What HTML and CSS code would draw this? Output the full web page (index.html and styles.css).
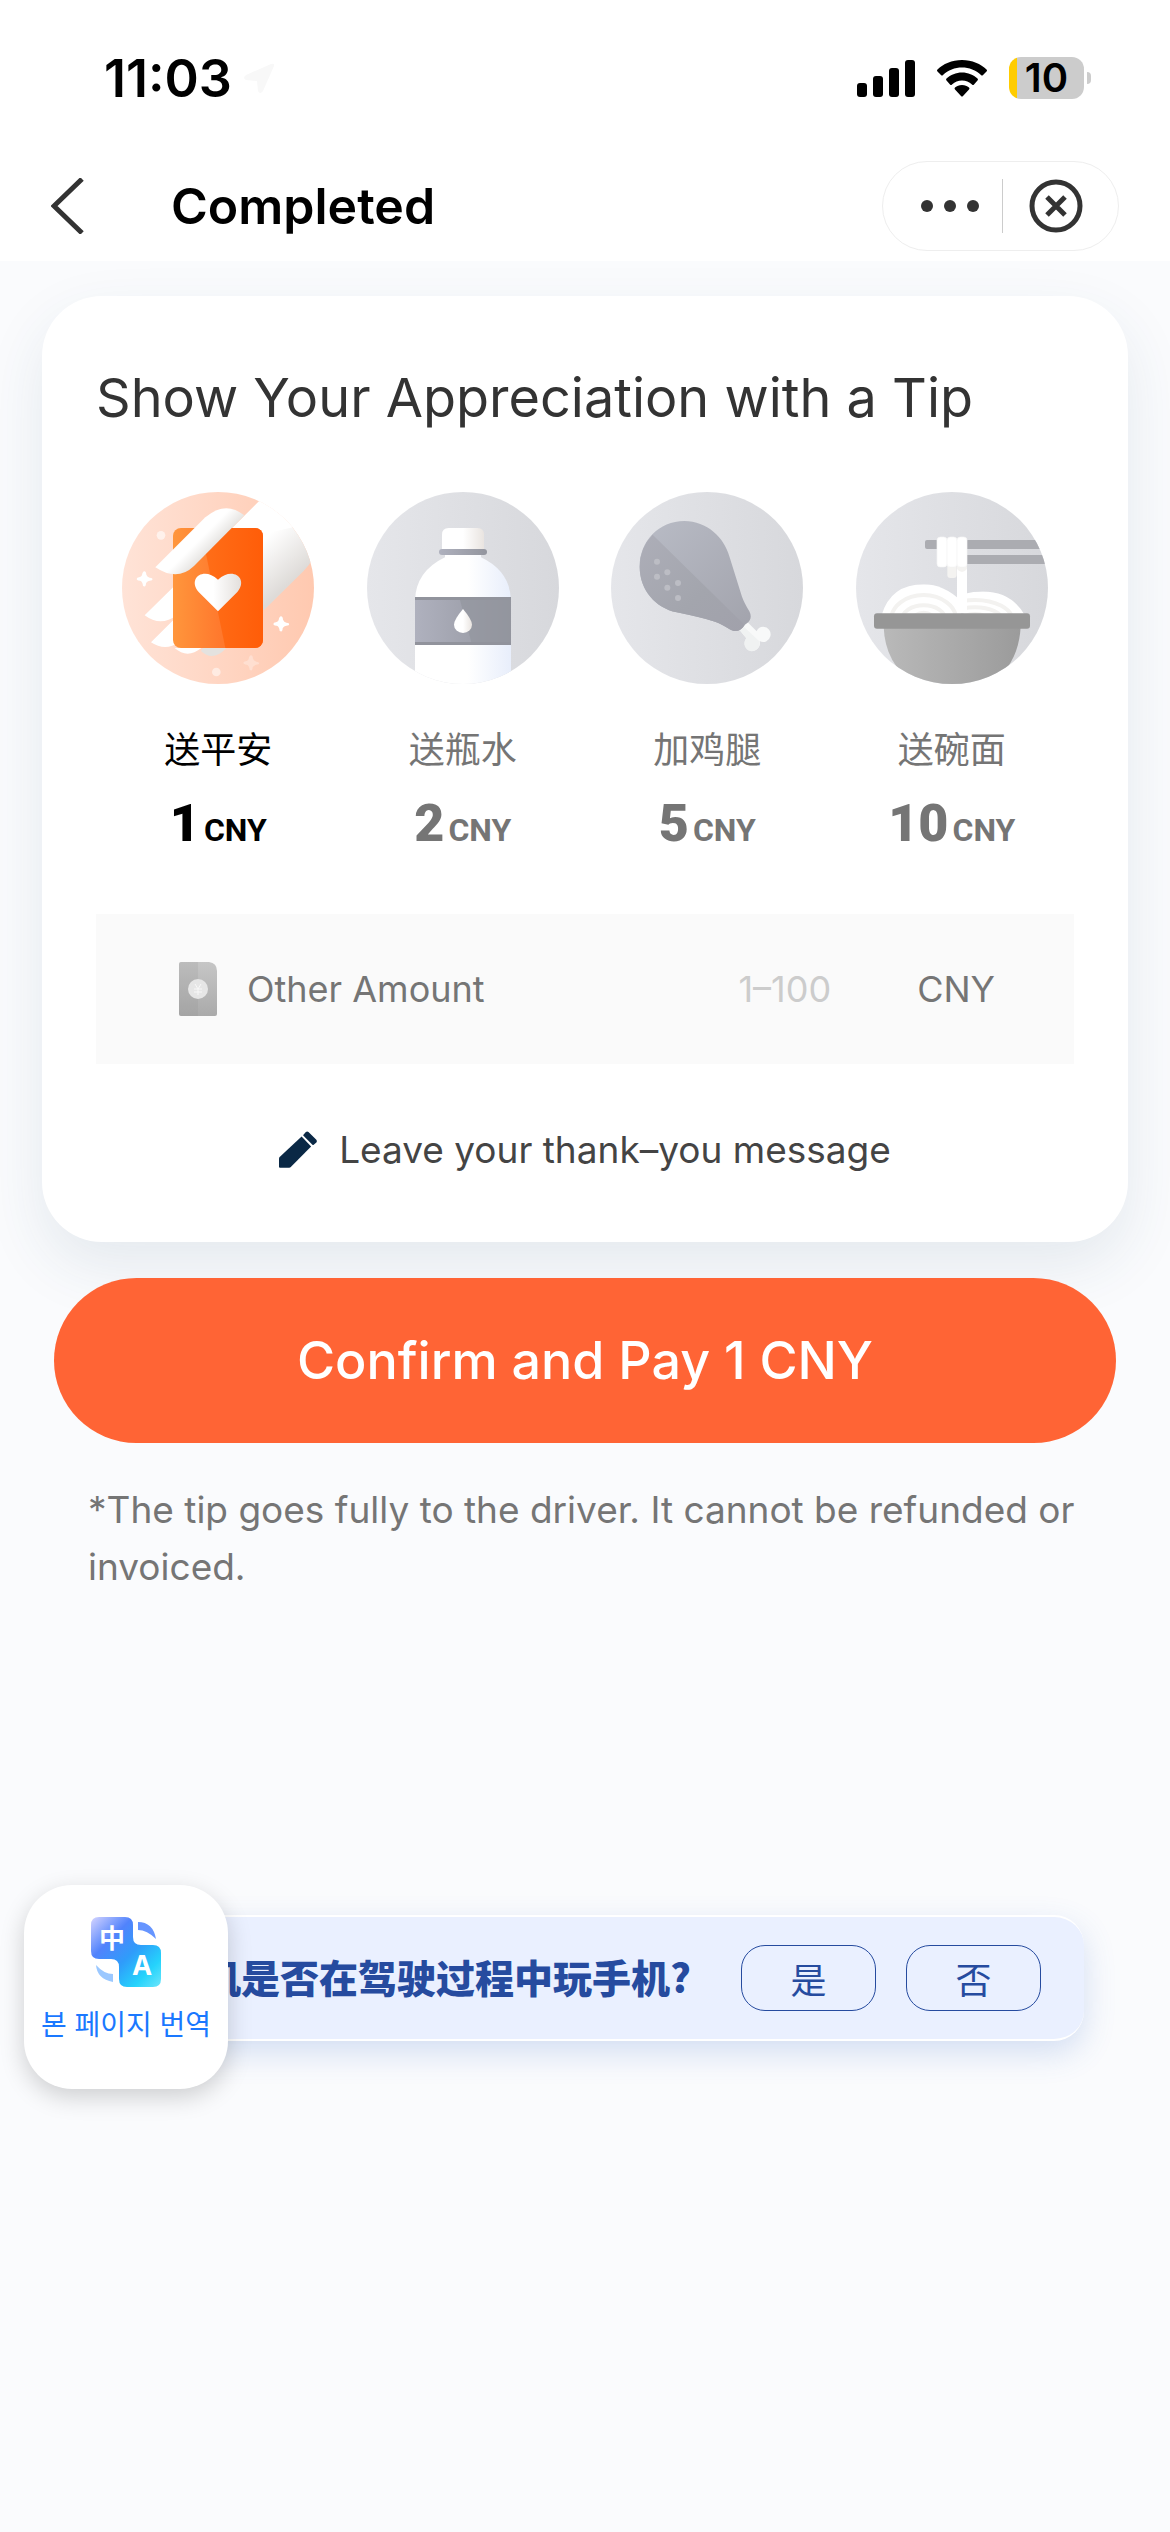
FILE: index.html
```html
<!DOCTYPE html>
<html lang="en">
<head>
  <meta charset="UTF-8">
  <meta name="viewport" content="width=device-width, initial-scale=1.0">
  <title>Completed</title>
  <link rel="stylesheet" href="styles.css">
</head>
<body>
  <header class="header">
    <div class="status-bar">
      <span class="time">11:03</span>
      <svg class="location" viewBox="0 0 30 30" fill="#f8f8f8"><path d="M27 1L2 12q-4 3 0 5l11 1 1 10q2 4 5 0L30 3q1-3-3-2z"/></svg>
      <div class="status-icons">
        <svg class="signal" viewBox="0 0 58 37">
          <rect x="0" y="23" width="10" height="14" rx="3"/>
          <rect x="16" y="16" width="10" height="21" rx="3"/>
          <rect x="32" y="8" width="10" height="29" rx="3"/>
          <rect x="48" y="0" width="10" height="37" rx="3"/>
        </svg>
        <svg class="wifi" viewBox="0 0 50 37">
          <path d="M25 0C15 0 6 4 .5 9.500q-1 1 0 2l3.500 3.500q1 1 2 0C11 10 18 7.500 25 7.500S39 10 44 15q1 1 2 0l3.500-3.500q1-1 0-2C44 4 35 0 25 0z"/>
          <path d="M25 12.500c-6 0-11.500 2.500-15.500 6q-1 1 0 2l3.500 4q1 1 2 0c3-2.500 6-4 10-4s7 1.500 10 4q1 1 2 0l3.500-4q1-1 0-2c-4-3.500-9.500-6-15.500-6z"/>
          <path d="M25 25c-3 0-5 1-7 2.500q-1 1 0 2l6 6.500q1 1 2 0l6-6.500q1-1 0-2C30 26 28 25 25 25z"/>
        </svg>
        <div class="battery"><span class="battery-level">10</span></div>
      </div>
    </div>
    <nav class="nav">
      <button class="back" aria-label="Back">
        <svg viewBox="0 0 34 56" fill="none" stroke="#333" stroke-width="5"><path d="M31 1L3 28l28 27"/></svg>
      </button>
      <h1 class="page-title">Completed</h1>
      <div class="capsule">
        <button class="capsule-button" aria-label="More">
          <svg class="dots" viewBox="0 0 58 12" fill="#333"><circle cx="6" cy="6" r="6"/><circle cx="29" cy="6" r="6"/><circle cx="52" cy="6" r="6"/></svg>
        </button>
        <span class="divider"></span>
        <button class="capsule-button" aria-label="Close">
          <svg class="close" viewBox="0 0 54 54" fill="none" stroke="#333" stroke-width="5"><circle cx="27" cy="27" r="24"/><path d="M18 18l18 18M36 18L18 36"/></svg>
        </button>
      </div>
    </nav>
  </header>

  <main class="main">
    <form class="card">
      <h2 class="card-title">Show Your Appreciation with a Tip</h2>
      <div class="tips" role="radiogroup" aria-label="Tip">
        <label class="tip">
          <input type="radio" name="tip" value="1" checked>
          <svg class="tip-icon" viewBox="66 66 576 576">
            <defs>
              <linearGradient id="peach"><stop offset="0" stop-color="#ffe3d7"/><stop offset="1" stop-color="#ffc9b0"/></linearGradient>
              <linearGradient id="orange"><stop offset="0" stop-color="#ff963c"/><stop offset=".5" stop-color="#ff7a2e"/><stop offset="1" stop-color="#ff6c1c"/></linearGradient>
              <linearGradient id="orangeDark"><stop offset="0" stop-color="#ff6f19"/><stop offset="1" stop-color="#ff5c08"/></linearGradient>
              <linearGradient id="heart"><stop offset=".4" stop-color="#fff"/><stop offset="1" stop-color="#e3dfdc"/></linearGradient>
              <linearGradient id="thumb" gradientUnits="userSpaceOnUse" x1="270" y1="180" x2="340" y2="250"><stop offset=".4" stop-color="#fff"/><stop offset="1" stop-color="#dfddda"/></linearGradient>
              <linearGradient id="palm" gradientUnits="userSpaceOnUse" x1="490" y1="210" x2="590" y2="320"><stop offset="0" stop-color="#fff"/><stop offset="1" stop-color="#dedbd8"/></linearGradient>
              <clipPath id="round"><circle cx="354" cy="354" r="288"/></clipPath>
              <clipPath id="packet"><rect x="219" y="174" width="270" height="360" rx="24"/></clipPath>
            </defs>
            <g clip-path="url(#round)">
              <rect x="66" y="66" width="576" height="576" fill="url(#peach)"/>
              <path d="M478 93L330 240v180h162L610 304q24-24 40-60V60H500z" fill="url(#palm)"/>
              <path d="M478 93L400 172h89v20l90-20 10-90z" fill="#fff"/>
              <path d="M230 341L134 436q48 36 96 0zM230 440L153 517q42 28 85 0zM224 534q38 34 80 0z" fill="#fff"/>
              <path d="M303 543q36 34 76-9h-70z" fill="#e4e2df"/>
            </g>
            <g clip-path="url(#packet)">
              <rect x="219" y="174" width="270" height="360" fill="url(#orange)"/>
              <path d="M302 174l74 360h120V170z" fill="url(#orangeDark)"/>
            </g>
            <path d="M166 292L316 142q60-52 117-6L282 288q-50 48-116 4z" fill="url(#thumb)"/>
            <path d="M354 424l-58-58c-35-42 16-78 58-37 42-41 93-5 58 37z" fill="url(#heart)"/>
            <path id="star" d="M133 304q5 0 6 10 3 7 10 9 12 1 7 8-15 2-18 9 0 13-9 8-1-14-9-16-14-1-8-9 12-2 14-8 2-11 7-11z" fill="#fff"/>
            <use href="#star" x="410" y="135"/>
            <use href="#star" x="320" y="252" opacity=".3"/>
            <circle cx="183" cy="196" r="13" fill="#fff" opacity=".6"/>
            <circle cx="349" cy="606" r="13" fill="#fff" opacity=".5"/>
          </svg>
          <span class="tip-name" lang="zh">送平安</span>
          <span class="tip-price"><b>1</b> CNY</span>
        </label>

        <label class="tip">
          <input type="radio" name="tip" value="2">
          <svg class="tip-icon" viewBox="66 66 576 576">
            <defs>
              <linearGradient id="grey"><stop offset="0" stop-color="#e5e6ea"/><stop offset="1" stop-color="#d7d8dc"/></linearGradient>
              <linearGradient id="bottle"><stop offset=".55" stop-color="#fff"/><stop offset="1" stop-color="#e8eefb"/></linearGradient>
              <linearGradient id="cap"><stop offset=".5" stop-color="#fff"/><stop offset="1" stop-color="#e9e4e0"/></linearGradient>
              <linearGradient id="band"><stop offset="0" stop-color="#afb1be"/><stop offset="1" stop-color="#93959e"/></linearGradient>
            </defs>
            <g clip-path="url(#round)">
              <rect x="66" y="66" width="576" height="576" fill="url(#grey)"/>
              <path d="M300 250h108v12q88 42 90 130v250H210V392q2-88 90-130z" fill="url(#bottle)"/>
              <path d="M291 240v-46q0-20 20-20h86q20 0 20 20v46z" fill="url(#cap)"/>
              <rect x="282" y="237" width="144" height="18" rx="9" fill="url(#band)"/>
              <rect x="210" y="381" width="288" height="144" fill="url(#band)"/>
              <path d="M345 390l34 126h119V390z" fill="#93959e" opacity=".7"/>
              <path d="M210 381h288v9H210zM210 516h288v9H210z" fill="#91939c"/>
              <path d="M354 417q27 32 27 47a27 25 0 0 1-54 0q0-15 27-47z" fill="url(#cap)"/>
            </g>
          </svg>
          <span class="tip-name" lang="zh">送瓶水</span>
          <span class="tip-price"><b>2</b> CNY</span>
        </label>

        <label class="tip">
          <input type="radio" name="tip" value="5">
          <svg class="tip-icon" viewBox="63 66 576 576">
            <defs>
              <linearGradient id="meatLight" x1="0" y1="0" x2="1" y2="1"><stop offset="0" stop-color="#b9bcc6"/><stop offset="1" stop-color="#a2a3ac"/></linearGradient>
              <linearGradient id="meatDark" x1="0" y1="0" x2="1" y2="1"><stop offset="0" stop-color="#adaeb8"/><stop offset=".6" stop-color="#a3a5ad"/><stop offset="1" stop-color="#a1a1ab"/></linearGradient>
            </defs>
            <circle cx="351" cy="354" r="288" fill="url(#grey)"/>
            <path d="M447 478l25-22 28 28q4-14 20-14a22 23 0 1 1-11 43 23 23 0 1 1-40-8z" fill="#f8f9f9"/>
            <path d="M447 478l12-10 49 46a23 23 0 1 1-39-9z" fill="#f0f2f2"/>
            <path d="M283 153c68 0 120 50 135 106l38 121q6 17 22 44c12 24-4 35-14 41-10 17-28 24-45 13q-25-17-44-23-38-12-115-28C198 414 149 361 149 290c0-77 58-137 134-137z" fill="url(#meatLight)"/>
            <path d="M188 194l276 271c-10 17-28 24-45 13q-25-17-44-23-38-12-115-28C198 414 149 361 149 290q0-56 39-96z" fill="url(#meatDark)"/>
            <g fill="#bcbdc4"><circle cx="201" cy="275" r="9"/><circle cx="232" cy="307" r="9"/><circle cx="201" cy="320" r="9"/><circle cx="264" cy="339" r="9"/><circle cx="232" cy="353" r="9"/><circle cx="264" cy="384" r="9"/></g>
          </svg>
          <span class="tip-name" lang="zh">加鸡腿</span>
          <span class="tip-price"><b>5</b> CNY</span>
        </label>

        <label class="tip">
          <input type="radio" name="tip" value="10">
          <svg class="tip-icon" viewBox="63 66 576 576">
            <defs>
              <linearGradient id="bowl"><stop offset="0" stop-color="#b9b9b9"/><stop offset="1" stop-color="#9b9b9b"/></linearGradient>
              <clipPath id="roundBowl"><circle cx="351" cy="354" r="288"/></clipPath>
              <clipPath id="noodleLeft"><path d="M140 435q28-92 126-92 60 0 112 50v42z"/></clipPath>
              <clipPath id="noodleRight"><path d="M385 372q130-30 184 63H385z"/></clipPath>
            </defs>
            <g clip-path="url(#roundBowl)">
              <rect x="63" y="66" width="576" height="576" fill="url(#grey)"/>
              <rect x="270" y="210" width="370" height="27" rx="6" fill="#abacb1"/>
              <rect x="380" y="255" width="260" height="27" fill="#abacb1"/>
              <rect x="337" y="270" width="28" height="54" rx="9" fill="#f4f3f1"/>
              <g clip-path="url(#noodleLeft)">
                <path d="M130 330h260v110H130z" fill="#fff"/>
                <g fill="none" stroke="#f3f2f0" stroke-width="12"><ellipse cx="266" cy="450" rx="98" ry="75"/><ellipse cx="266" cy="450" rx="66" ry="44"/><ellipse cx="266" cy="450" rx="32" ry="22"/></g>
              </g>
              <g clip-path="url(#noodleRight)">
                <path d="M380 350h200v90H380z" fill="#fff"/>
                <g fill="none" stroke="#f3f2f0" stroke-width="12"><ellipse cx="420" cy="450" rx="112" ry="60"/><ellipse cx="420" cy="450" rx="82" ry="38"/><ellipse cx="420" cy="450" rx="40" ry="18"/></g>
              </g>
              <path d="M366 280h30v150h-30z" fill="#fff"/>
              <path d="M366 285h30v12q-7 9-15 9t-15-9z" fill="#f4f3f1"/>
              <g fill="#fff" stroke="#f4f4f4" stroke-width="2"><rect x="306" y="201" width="30" height="90" rx="10"/><rect x="336" y="201" width="30" height="90" rx="10"/><rect x="366" y="201" width="30" height="90" rx="10"/></g>
              <path d="M146 470h411q-6 112-90 172H240q-90-60-94-172z" fill="url(#bowl)"/>
              <rect x="117" y="430" width="468" height="46" rx="9" fill="#969696"/>
            </g>
          </svg>
          <span class="tip-name" lang="zh">送碗面</span>
          <span class="tip-price"><b>10</b> CNY</span>
        </label>
      </div>

      <div class="amount">
        <svg class="amount-icon" viewBox="0 0 38 54">
          <defs><linearGradient id="note" x1="0" y1="0" x2="0" y2="1"><stop offset="0" stop-color="#c6c6c6"/><stop offset="1" stop-color="#aaa"/></linearGradient></defs>
          <path d="M2 0h28q8 1 8 9v43q0 2-2 2H2q-2 0-2-2V2q0-2 2-2z" fill="url(#note)"/>
          <path d="M19 0v54H2q-2 0-2-2V2q0-2 2-2z" fill="#888" opacity=".16"/>
          <circle cx="19" cy="27" r="10" fill="#e6e6e6"/>
          <path d="M16 22l3 5 3-5M19 27v6M15 27h8M15 30h8" fill="none" stroke="#f8f8f8"/>
        </svg>
        <label for="amount">Other Amount</label>
        <input type="text" id="amount" placeholder="1–100">
        <span>CNY</span>
      </div>

      <button type="button" class="message">
        <svg class="pencil" viewBox="364 567 116 114" fill="#0a2845">
          <path d="M433 584l29 30-62 63q-2 2-5 2h-28q-3 0-3-3v-25q0-3 2-5z"/>
          <path d="M438 579l8-9q4-3 8 0l24 24q3 4 0 8l-8 7q-2 2-4 0l-28-28z"/>
        </svg>
        Leave your thank–you message
      </button>
    </form>

    <button class="pay">Confirm and Pay 1 CNY</button>
    <p class="note">*The tip goes fully to the driver. It cannot be refunded or invoiced.</p>

    <section class="survey" lang="zh">
      <span class="survey-text">司机是否在驾驶过程中玩手机?</span>
      <button class="answer">是</button>
      <button class="answer">否</button>

      <button class="translate" lang="ko">
        <svg class="translate-icon" viewBox="0 0 70 70">
          <defs><linearGradient id="blue" x1="0" y1="0" x2="1" y2="1"><stop offset="0" stop-color="#d5d4ff"/><stop offset=".3" stop-color="#5183fc"/><stop offset=".55" stop-color="#2f9cfa"/><stop offset=".8" stop-color="#25d3fc"/><stop offset="1" stop-color="#6ce6fb"/></linearGradient></defs>
          <path d="M8 0h26q8 0 8 8v12q0 8 8 8h12q8 0 8 8v26q0 8-8 8H36q-8 0-8-8V50q0-8-8-8H8q-8 0-8-8V8q0-8 8-8z" fill="url(#blue)"/>
          <path d="M47 5q15 0 18 17-9-9-18-9z" fill="#6695ff"/>
          <path d="M5 48q8 9 17 9v8Q6 62 5 48z" fill="#9bc8ff"/>
          <text class="translate-zh" x="21" y="31">中</text>
          <text class="translate-en" x="51" y="58">A</text>
        </svg>
        본 페이지 번역
      </button>
    </section>
  </main>
</body>
</html>
```
FILE: styles.css
```css
/* Basic styles */
* {
  box-sizing: border-box;
}
body {
  font-family: Inter, "Noto Sans CJK SC", sans-serif;
  font-size: 36px;
  margin: 0;
  min-height: 100vh;
  color: #333;
  background-color: #fafbfd;
}
button {
  font: inherit;
  color: inherit;
  padding: 0;
  border: none;
  background: none;
  cursor: pointer;
}
svg {
  display: block;
  flex: none;
}

/* Header */
.header {
  background-color: #fff;
  padding-bottom: 10px;
}
.status-bar {
  display: flex;
  align-items: center;
  height: 156px;
  padding: 0 79px 0 104px;
}
.time {
  color: #000;
  font-size: 52px;
  font-weight: 600;
}
.location {
  width: 30px;
  margin-left: 12px;
}
.status-icons {
  display: flex;
  align-items: center;
  gap: 22px;
  margin-left: auto;
}
.signal {
  width: 58px;
}
.wifi {
  width: 50px;
}
.battery {
  display: flex;
  align-items: center;
  gap: 3px;
}
.battery::after {
  content: "";
  width: 4px;
  height: 12px;
  border-radius: 0 6px 6px 0;
  background-color: #ccc;
}
.battery-level {
  width: 75px;
  border-radius: 12px;
  background: linear-gradient(90deg, #fc0 8px, #ccc 8px);
  color: #000;
  font-size: 40px;
  font-weight: 600;
  line-height: 42px;
  text-align: center;
}
.nav {
  display: flex;
  align-items: center;
  padding: 5px 51px 0;
}
.back svg {
  width: 34px;
}
.page-title {
  margin: 0 0 0 86px;
  color: #000;
  font-size: 50px;
  font-weight: 600;
}
.capsule {
  display: flex;
  align-items: center;
  width: 237px;
  height: 90px;
  margin-left: auto;
  padding: 0 10px 0 14px;
  border: 1px solid #eee;
  border-radius: 45px;
}
.capsule-button {
  display: flex;
  flex: 1;
  justify-content: center;
}
.divider {
  width: 1px;
  height: 54px;
  background-color: #ccc;
}
.dots {
  width: 58px;
}
.close {
  width: 54px;
}

/* Tip card */
.main {
  padding: 35px 42px;
}
.card {
  padding: 66px 54px;
  border-radius: 60px;
  background-color: #fff;
  box-shadow: 0 24px 60px rgba(40, 80, 110, 0.1);
}
.card-title {
  margin: 0;
  font-size: 54px;
  font-weight: 400;
  line-height: 72px;
}
.tips {
  display: grid;
  grid-template-columns: repeat(4, 1fr);
  margin-top: 58px;
}
.tip {
  display: flex;
  flex-direction: column;
  align-items: center;
  color: #757575;
  cursor: pointer;
}
.tip:has(:checked) {
  color: #000;
}
.tip input {
  position: absolute;
  opacity: 0;
}
.tip-icon {
  width: 192px;
}
.tip-name {
  margin-top: 42px;
  line-height: 48px;
}
.tip-price {
  display: flex;
  align-items: baseline;
  gap: 4px;
  margin-top: 22px;
  font-family: Roboto, sans-serif;
  font-size: 32px;
  font-weight: 700;
  line-height: 56px;
}
.tip-price b {
  font-size: 52px;
}
.amount {
  display: flex;
  align-items: center;
  height: 150px;
  margin-top: 56px;
  padding: 0 79px 0 83px;
  background-color: #fafafa;
  color: #757575;
}
.amount-icon {
  width: 38px;
  margin-right: 30px;
}
.amount input {
  flex: 1;
  min-width: 0;
  margin-right: 86px;
  padding: 0;
  border: none;
  outline: none;
  background: none;
  font: inherit;
  text-align: right;
}
.amount input::placeholder {
  color: #ccc;
}
.message {
  display: flex;
  align-items: center;
  gap: 22px;
  margin: 60px auto 0;
  color: #444;
  font-size: 37px;
  line-height: 52px;
}
.pencil {
  width: 38px;
}

/* Payment */
.pay {
  display: block;
  position: relative;
  width: calc(100% - 24px);
  height: 165px;
  margin: 36px 12px 0;
  border-radius: 83px;
  background-color: #ff6435;
  color: #fff;
  font-size: 52px;
  font-weight: 500;
}
.note {
  margin: 38px 36px 0 46px;
  color: #757575;
  font-size: 37px;
  line-height: 57px;
}

/* Survey */
.survey {
  display: flex;
  align-items: center;
  gap: 30px;
  position: relative;
  height: 126px;
  margin: 320px 44px 0;
  padding-right: 43px;
  border-top: 2px solid #fff;
  border-bottom: 2px solid #fff;
  border-radius: 30px;
  background-color: #eaf0ff;
  box-shadow: 0 12px 32px rgba(60, 110, 200, 0.2);
  color: #264b9f;
  font-family: "Noto Sans CJK SC", sans-serif;
}
.survey-text {
  margin-left: auto;
  padding: 0 20px 4px 0;
  font-size: 39px;
  font-weight: 900;
}
.answer {
  width: 135px;
  height: 66px;
  border: 1px solid #264b9f;
  border-radius: 24px;
  line-height: 60px;
}
.translate {
  display: flex;
  flex-direction: column;
  align-items: center;
  gap: 16px;
  position: absolute;
  left: -62px;
  top: -32px;
  width: 204px;
  height: 204px;
  padding-top: 32px;
  border-radius: 48px;
  background-color: #fff;
  box-shadow: 0 8px 24px rgba(0, 0, 0, 0.18);
  color: #1a78ff;
  font-family: "Noto Sans CJK KR", sans-serif;
  font-size: 28px;
}
.translate-icon {
  width: 70px;
}
.translate-zh,
.translate-en {
  fill: #fff;
  font-weight: 700;
  text-anchor: middle;
}
.translate-zh {
  font-size: 26px;
}
.translate-en {
  font-family: Inter, sans-serif;
  font-size: 27px;
}
```
